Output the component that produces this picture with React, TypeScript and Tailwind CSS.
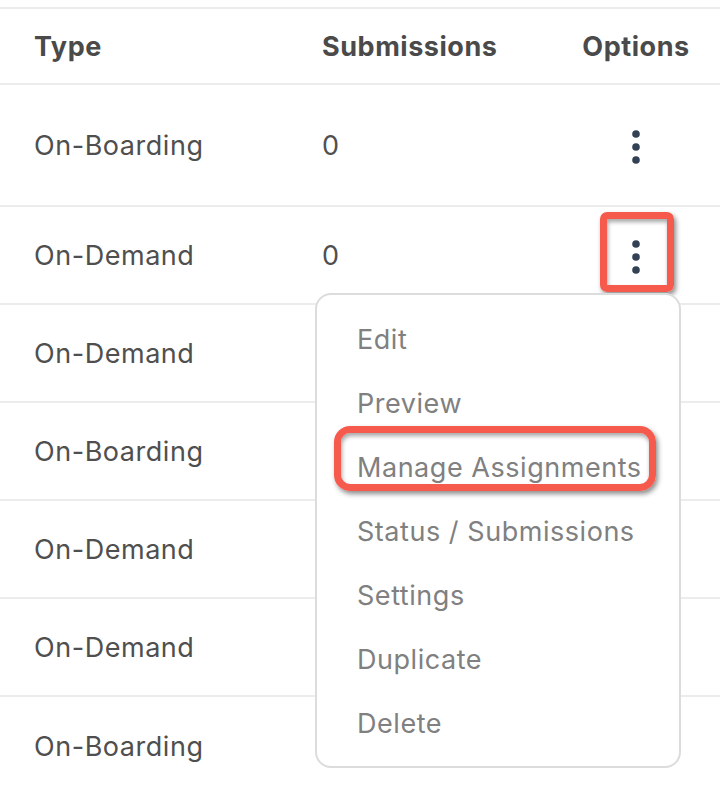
const rows = [
  { type: "On-Boarding", subs: "0", tall: true },
  { type: "On-Demand", subs: "0" },
  { type: "On-Demand", subs: "" },
  { type: "On-Boarding", subs: "" },
  { type: "On-Demand", subs: "" },
  { type: "On-Demand", subs: "" },
  { type: "On-Boarding", subs: "" },
];

const menuItems = [
  "Edit",
  "Preview",
  "Manage Assignments",
  "Status / Submissions",
  "Settings",
  "Duplicate",
  "Delete",
];

function Dots() {
  return (
    <svg width="10" height="34" viewBox="0 0 10 34" className="text-[#334155]">
      <circle cx="5" cy="4" r="3.8" fill="currentColor" />
      <circle cx="5" cy="17" r="3.8" fill="currentColor" />
      <circle cx="5" cy="30" r="3.8" fill="currentColor" />
    </svg>
  );
}

export default function App() {
  return (
    <div className="relative w-[720px] h-[794px] overflow-hidden bg-white font-['Inter',sans-serif] text-[27px] tracking-[0.02em]">
      <div className="h-[7px]" />
      {/* Header */}
      <div className="grid grid-cols-[322px_230px_168px] h-[78px] pt-[2px] items-center border-y-2 border-[#ececec] font-bold text-[#4a4a4a]">
        <div className="pl-[34px]">Type</div>
        <div>Submissions</div>
        <div className="text-center">Options</div>
      </div>

      {/* Rows */}
      {rows.map((r, i) => (
        <div
          key={i}
          className={`grid grid-cols-[322px_230px_168px] items-center pt-[3px] text-[#4f4f4f] ${
            r.tall ? "h-[122px]" : "h-[98px]"
          } ${i < rows.length - 1 ? "border-b-2 border-[#ececec]" : ""}`}
        >
          <div className="pl-[34px]">{r.type}</div>
          <div>{r.subs}</div>
          <div className="flex justify-center">{r.subs !== "" && <Dots />}</div>
        </div>
      ))}

      {/* Highlight around options button */}
      <div className="absolute left-[600px] top-[212px] w-[74px] h-[80px] rounded-[7px] border-[7px] border-[#f65a4c] shadow-[2px_3px_5px_rgba(0,0,0,0.45),inset_1px_3px_4px_rgba(0,0,0,0.35)]" />

      {/* Dropdown menu */}
      <div className="absolute left-[315px] top-[293px] w-[366px] h-[475px] rounded-[16px] border-2 border-[#dcdcdc] bg-white pt-[13px] text-[#808080]">
        {menuItems.map((m) => (
          <div key={m} className="h-[64px] flex items-center pl-[40px]">
            {m}
          </div>
        ))}
      </div>

      {/* Highlight around Manage Assignments */}
      <div className="absolute left-[334px] top-[426px] w-[322px] h-[65px] rounded-[16px] border-[7px] border-[#f65a4c] shadow-[2px_3px_5px_rgba(0,0,0,0.45),inset_1px_3px_4px_rgba(0,0,0,0.35)]" />
    </div>
  );
}
